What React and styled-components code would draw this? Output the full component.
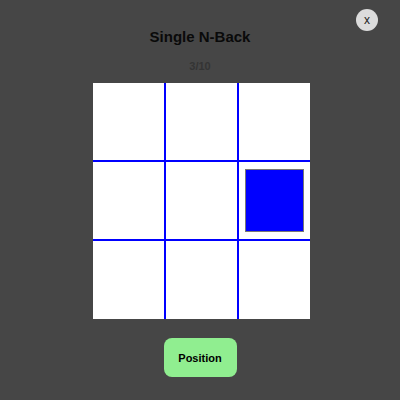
import styled, { createGlobalStyle } from "styled-components";

const GlobalStyle = createGlobalStyle`
    html, body {
        margin: 0;
        padding: 0;
        background: #464646;
        font-family: "Liberation Sans", Arial, sans-serif;
    }
`

const Screen = styled.div`
    position: relative;
    width: 400px;
    height: 400px;
    box-sizing: border-box;
    padding-top: 28px;
    display: flex;
    flex-direction: column;
    align-items: center;
    background: #464646;
`

const Title = styled.h1`
    margin: 0;
    font-size: 15px;
    line-height: 18px;
    font-weight: bold;
    color: #0a0a0a;
`

const Counter = styled.div`
    margin-top: 13px;
    font-size: 11px;
    line-height: 14px;
    font-weight: bold;
    color: #343434;
`

const Board = styled.div`
    margin-top: 10px;
    margin-left: 3px;
    display: grid;
    grid-template-columns: repeat(3, 71px);
    grid-template-rows: 77px 77px 78px;
    gap: 2px;
    background: #0000ff;
`

const Cell = styled.div`
    background: #ffffff;
    display: flex;
    justify-content: center;
    align-items: center;
`

const Stimulus = styled.div`
    width: 80%;
    height: 80%;
    background: #0000ff;
    border: 1px solid #777;
`

const PositionButton = styled.button`
    margin-top: 19px;
    width: 73px;
    height: 39px;
    border: none;
    border-radius: 8px;
    background: #90ee90;
    color: #000;
    font-family: "Liberation Sans", Arial, sans-serif;
    font-size: 11px;
    font-weight: bold;
    cursor: pointer;
`

const CloseButton = styled.button`
    position: absolute;
    top: 9px;
    right: 22px;
    width: 22px;
    height: 22px;
    padding: 0;
    border: none;
    border-radius: 50%;
    background: #dcdcdc;
    color: #222;
    font-family: "Liberation Sans", Arial, sans-serif;
    font-size: 12px;
    line-height: 20px;
    cursor: pointer;
`

const ACTIVE = 5;

const App = () => {
    return (
        <Screen>
            <GlobalStyle />
            <CloseButton>x</CloseButton>
            <Title>Single N-Back</Title>
            <Counter>3/10</Counter>
            <Board>
                {Array.from({ length: 9 }).map((_, i) => (
                    <Cell key={i}>{i === ACTIVE && <Stimulus />}</Cell>
                ))}
            </Board>
            <PositionButton>Position</PositionButton>
        </Screen>
    );
};

export default App;
